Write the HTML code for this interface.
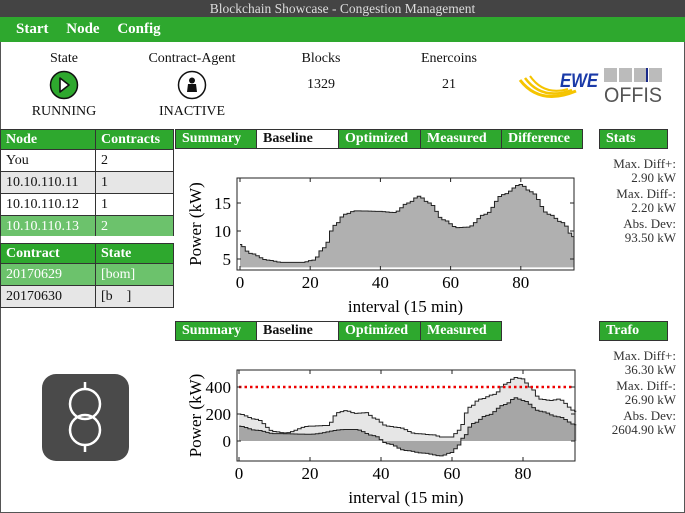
<!DOCTYPE html>
<html><head><meta charset="utf-8">
<style>
*{margin:0;padding:0;box-sizing:border-box}
body{width:685px;height:513px;overflow:hidden;background:#fff;font-family:"Liberation Serif",serif;position:relative;color:#111}
.abs{position:absolute}
#title{left:0;top:0;width:685px;height:17px;background:#444;color:#ddd;font-size:13.5px;text-align:center;line-height:17px}
#menu{left:0;top:17px;width:685px;height:25px;background:#2ea82e;color:#fff;font-weight:bold;font-size:15px;line-height:25px}
#menu span{margin-left:16px;margin-right:-2px}
.frame{border-left:1px solid #555;border-right:1px solid #555;border-bottom:1px solid #555;left:0;top:42px;width:685px;height:471px}
.hd{font-size:14px;text-align:center;width:120px}
table{border-collapse:collapse;font-size:14px}
td{border:1px solid #333;padding:0 5px;height:22px}
.g{background:#2ea82e;color:#fff;font-weight:bold;font-size:14px;height:20px}
.lg{background:#6cc26c;color:#fff}
.gr{background:#e6e6e6}
.tab{height:20px;border:1px solid #333;font-weight:bold;font-size:14px;line-height:18px;padding-left:6px;background:#2ea82e;color:#fff;white-space:nowrap;overflow:hidden}
.tab.w{background:#fff;color:#111}
.st{font-size:13px;text-align:right;line-height:14px;color:#333;white-space:nowrap}
</style></head><body>
<div class="abs" id="title">Blockchain Showcase - Congestion Management</div>
<div class="abs" id="menu"><span>Start</span> <span>Node</span> <span>Config</span></div>
<div class="abs frame"></div>

<div class="abs hd" style="left:4px;top:51px">State</div>
<svg class="abs" style="left:49px;top:70px" width="30" height="30"><circle cx="15" cy="15" r="13.5" fill="#2ea82e" stroke="#111" stroke-width="1.5"/><path d="M11 8 L20 15 L11 22 Z" fill="#fff" stroke="#111" stroke-width="1.6" stroke-linejoin="round"/></svg>
<div class="abs hd" style="left:4px;top:104px">RUNNING</div>
<div class="abs hd" style="left:132px;top:51px">Contract-Agent</div>
<svg class="abs" style="left:177px;top:70px" width="30" height="30"><circle cx="15" cy="15" r="13.5" fill="#fff" stroke="#111" stroke-width="1.5"/><circle cx="15" cy="10.5" r="3" fill="#111"/><path d="M10 22 L11 14 L19 14 L20 22Z" fill="#111"/></svg>
<div class="abs hd" style="left:132px;top:104px">INACTIVE</div>
<div class="abs hd" style="left:261px;top:51px">Blocks</div>
<div class="abs hd" style="left:261px;top:77px">1329</div>
<div class="abs hd" style="left:389px;top:51px">Enercoins</div>
<div class="abs hd" style="left:389px;top:77px">21</div>

<svg class="abs" style="left:518px;top:66px" width="82" height="36"><path d="M2 14 Q22 40 58 25" stroke="#f5c400" stroke-width="3" fill="none"/><path d="M7 12 Q24 35 54 24" stroke="#f5c400" stroke-width="2.5" fill="none"/><path d="M12 10 Q26 30 50 23" stroke="#f5c400" stroke-width="2" fill="none"/><text x="42" y="21" font-family="Liberation Sans,sans-serif" font-weight="bold" font-style="italic" font-size="19" fill="#1a3aa8" textLength="38" lengthAdjust="spacingAndGlyphs">EWE</text></svg>
<svg class="abs" style="left:604px;top:68px" width="64" height="36"><rect x="0" y="0" width="13" height="14" fill="#bbb"/><rect x="15" y="0" width="13" height="14" fill="#bbb"/><rect x="30" y="0" width="13" height="14" fill="#bbb"/><rect x="45" y="0" width="13" height="14" fill="#bbb"/><rect x="42" y="0" width="2" height="14" fill="#1a2a8a"/><text x="0" y="34" font-family="Liberation Sans,sans-serif" font-size="21" fill="#555" textLength="58" lengthAdjust="spacingAndGlyphs">OFFIS</text></svg>

<div class="abs" style="left:0;top:129px;width:174px;height:107px;overflow:hidden">
<table style="width:174px"><tr><td class="g" style="width:95px">Node</td><td class="g">Contracts</td></tr>
<tr><td>You</td><td>2</td></tr><tr class="gr"><td>10.10.110.11</td><td>1</td></tr><tr><td>10.10.110.12</td><td>1</td></tr><tr class="lg"><td>10.10.110.13</td><td>2</td></tr><tr><td>10.10.110.14</td><td>1</td></tr></table></div>
<div class="abs" style="left:0;top:243px;width:174px">
<table style="width:174px"><tr><td class="g" style="width:95px">Contract</td><td class="g">State</td></tr>
<tr class="lg"><td>20170629</td><td>[bom]</td></tr><tr class="gr"><td>20170630</td><td>[b &nbsp;&nbsp;&nbsp;]</td></tr></table></div>

<div class="abs tab" style="left:175px;top:129px;width:82px">Summary</div>
<div class="abs tab w" style="left:256px;top:129px;width:83px">Baseline</div>
<div class="abs tab" style="left:338px;top:129px;width:83px">Optimized</div>
<div class="abs tab" style="left:420px;top:129px;width:82px">Measured</div>
<div class="abs tab" style="left:501px;top:129px;width:82px">Difference</div>
<div class="abs tab" style="left:599px;top:129px;width:69px">Stats</div>
<div class="abs st" style="left:596px;top:157px;width:80px">Max. Diff+:<br>2.90 kW</div>
<div class="abs st" style="left:596px;top:187px;width:80px">Max. Diff-:<br>2.20 kW</div>
<div class="abs st" style="left:596px;top:217px;width:80px">Abs. Dev:<br>93.50 kW</div>

<div class="abs tab" style="left:175px;top:321px;width:82px">Summary</div>
<div class="abs tab w" style="left:256px;top:321px;width:83px">Baseline</div>
<div class="abs tab" style="left:338px;top:321px;width:83px">Optimized</div>
<div class="abs tab" style="left:420px;top:321px;width:82px">Measured</div>
<div class="abs tab" style="left:599px;top:321px;width:69px">Trafo</div>
<div class="abs st" style="left:596px;top:349px;width:80px">Max. Diff+:<br>36.30 kW</div>
<div class="abs st" style="left:596px;top:379px;width:80px">Max. Diff-:<br>26.90 kW</div>
<div class="abs st" style="left:596px;top:409px;width:80px">Abs. Dev:<br>2604.90 kW</div>

<svg class="abs" style="left:42px;top:374px" width="87" height="87"><rect x="0" y="0" width="87" height="87" rx="14" fill="#4a4a4a"/><g stroke="#fff" stroke-width="2.5" fill="none"><circle cx="43" cy="30" r="15"/><circle cx="43" cy="56" r="15"/><line x1="43" y1="8" x2="43" y2="15"/><line x1="43" y1="71" x2="43" y2="78"/></g></svg>

<svg class="abs" style="left:170px;top:170px" width="420" height="145" id="c1" font-family="Liberation Serif,serif"></svg>
<svg class="abs" style="left:170px;top:360px" width="420" height="150" id="c2" font-family="Liberation Serif,serif"></svg>

<script>
function interp(kp){var v=[];for(var i=0;i<96;i++){for(var k=0;k<kp.length-1;k++){if(i>=kp[k][0]&&i<=kp[k+1][0]){var t=(i-kp[k][0])/(kp[k+1][0]-kp[k][0]);var s=(1-Math.cos(t*Math.PI))/2;v.push(kp[k][1]+(kp[k+1][1]-kp[k][1])*s);break;}}}return v;}
function step(v,X,Y){var d="M"+X(0)+" "+Y(v[0]);for(var i=0;i<v.length;i++){d+=" H"+X(i+0.5>95?95:i+0.5);if(i+1<v.length)d+=" V"+Y(v[i+1]);}return d;}
function axes(svg,x0,x1,y0,y1,X,Y,yt,yl){var s='';s+='<rect x="'+x0+'" y="'+y0+'" width="'+(x1-x0)+'" height="'+(y1-y0)+'" fill="none" stroke="#222" stroke-width="1"/>';
[0,20,40,60,80].forEach(function(t){s+='<line x1="'+X(t)+'" y1="'+y1+'" x2="'+X(t)+'" y2="'+(y1-4)+'" stroke="#222"/><line x1="'+X(t)+'" y1="'+y0+'" x2="'+X(t)+'" y2="'+(y0+4)+'" stroke="#222"/><text x="'+X(t)+'" y="'+(y1+18)+'" font-size="17" text-anchor="middle">'+t+'</text>';});
yt.forEach(function(t){s+='<line x1="'+x0+'" y1="'+Y(t)+'" x2="'+(x0+4)+'" y2="'+Y(t)+'" stroke="#222"/><line x1="'+x1+'" y1="'+Y(t)+'" x2="'+(x1-4)+'" y2="'+Y(t)+'" stroke="#222"/><text x="'+(x0-6)+'" y="'+(Y(t)+6)+'" font-size="17" text-anchor="end">'+t+'</text>';});
s+='<text x="'+((x0+x1)/2)+'" y="'+(y1+42)+'" font-size="17" text-anchor="middle">interval (15 min)</text>';
s+='<text transform="translate(31 '+((y0+y1)/2)+') rotate(-90)" font-size="17" text-anchor="middle">Power (kW)</text>';return s;}
(function(){var X=function(i){return 240-170+i*3.51},Y=function(v){return 259-170-(v-5)*5.6};
var v=interp([[0,7.6],[3,6],[8,4.8],[12,4.4],[18,4.4],[21,4.8],[24,7],[27,11],[30,13],[33,13.6],[40,13.5],[44,13.3],[48,15],[51,16.2],[54,15],[58,12],[62,10.6],[65,10.7],[70,13],[75,16.5],[80,18.3],[83,17],[88,13],[92,11.5],[95,9]]);
var d=step(v,X,Y);var base=Y(3.5);
var s='<path d="'+d+' V'+base+' H'+X(0)+' Z" fill="#b0b0b0"/><path d="'+d+'" fill="none" stroke="#222" stroke-width="1"/>';
s+=axes(null,67,404,8,100,X,Y,[5,10,15]);document.getElementById('c1').innerHTML=s;})();
(function(){var X=function(i){return 239-170+i*3.55},Y=function(v){return 441-360-v*0.135};
var a=interp([[0,200],[5,160],[10,70],[13,60],[20,110],[25,115],[28,210],[30,225],[33,205],[36,210],[38,170],[42,110],[45,100],[50,55],[55,45],[57,30],[60,30],[62,80],[65,250],[68,310],[72,345],[75,420],[78,470],[80,460],[82,400],[85,310],[88,300],[90,310],[95,220]]);
var b=interp([[0,110],[5,80],[10,55],[20,50],[30,85],[33,85],[38,40],[42,-20],[47,-70],[52,-90],[57,-110],[60,-85],[62,-30],[63,20],[66,130],[70,190],[75,270],[78,320],[80,300],[85,220],[90,180],[95,120]]);
var da=step(a,X,Y),db=step(b,X,Y),z=Y(0);
var s='<path d="'+da+' V'+z+' H'+X(0)+' Z" fill="#e6e6e6"/><path d="'+db+' V'+z+' H'+X(0)+' Z" fill="#a6a6a6"/><path d="'+da+'" fill="none" stroke="#222"/><path d="'+db+'" fill="none" stroke="#222"/>';
s+='<line x1="'+X(0)+'" y1="'+Y(400)+'" x2="405" y2="'+Y(400)+'" stroke="#e00" stroke-width="2.5" stroke-dasharray="2.5 3"/>';
s+=axes(null,67,405,10,101,X,Y,[0,200,400]);document.getElementById('c2').innerHTML=s;})();
</script>
</body></html>
